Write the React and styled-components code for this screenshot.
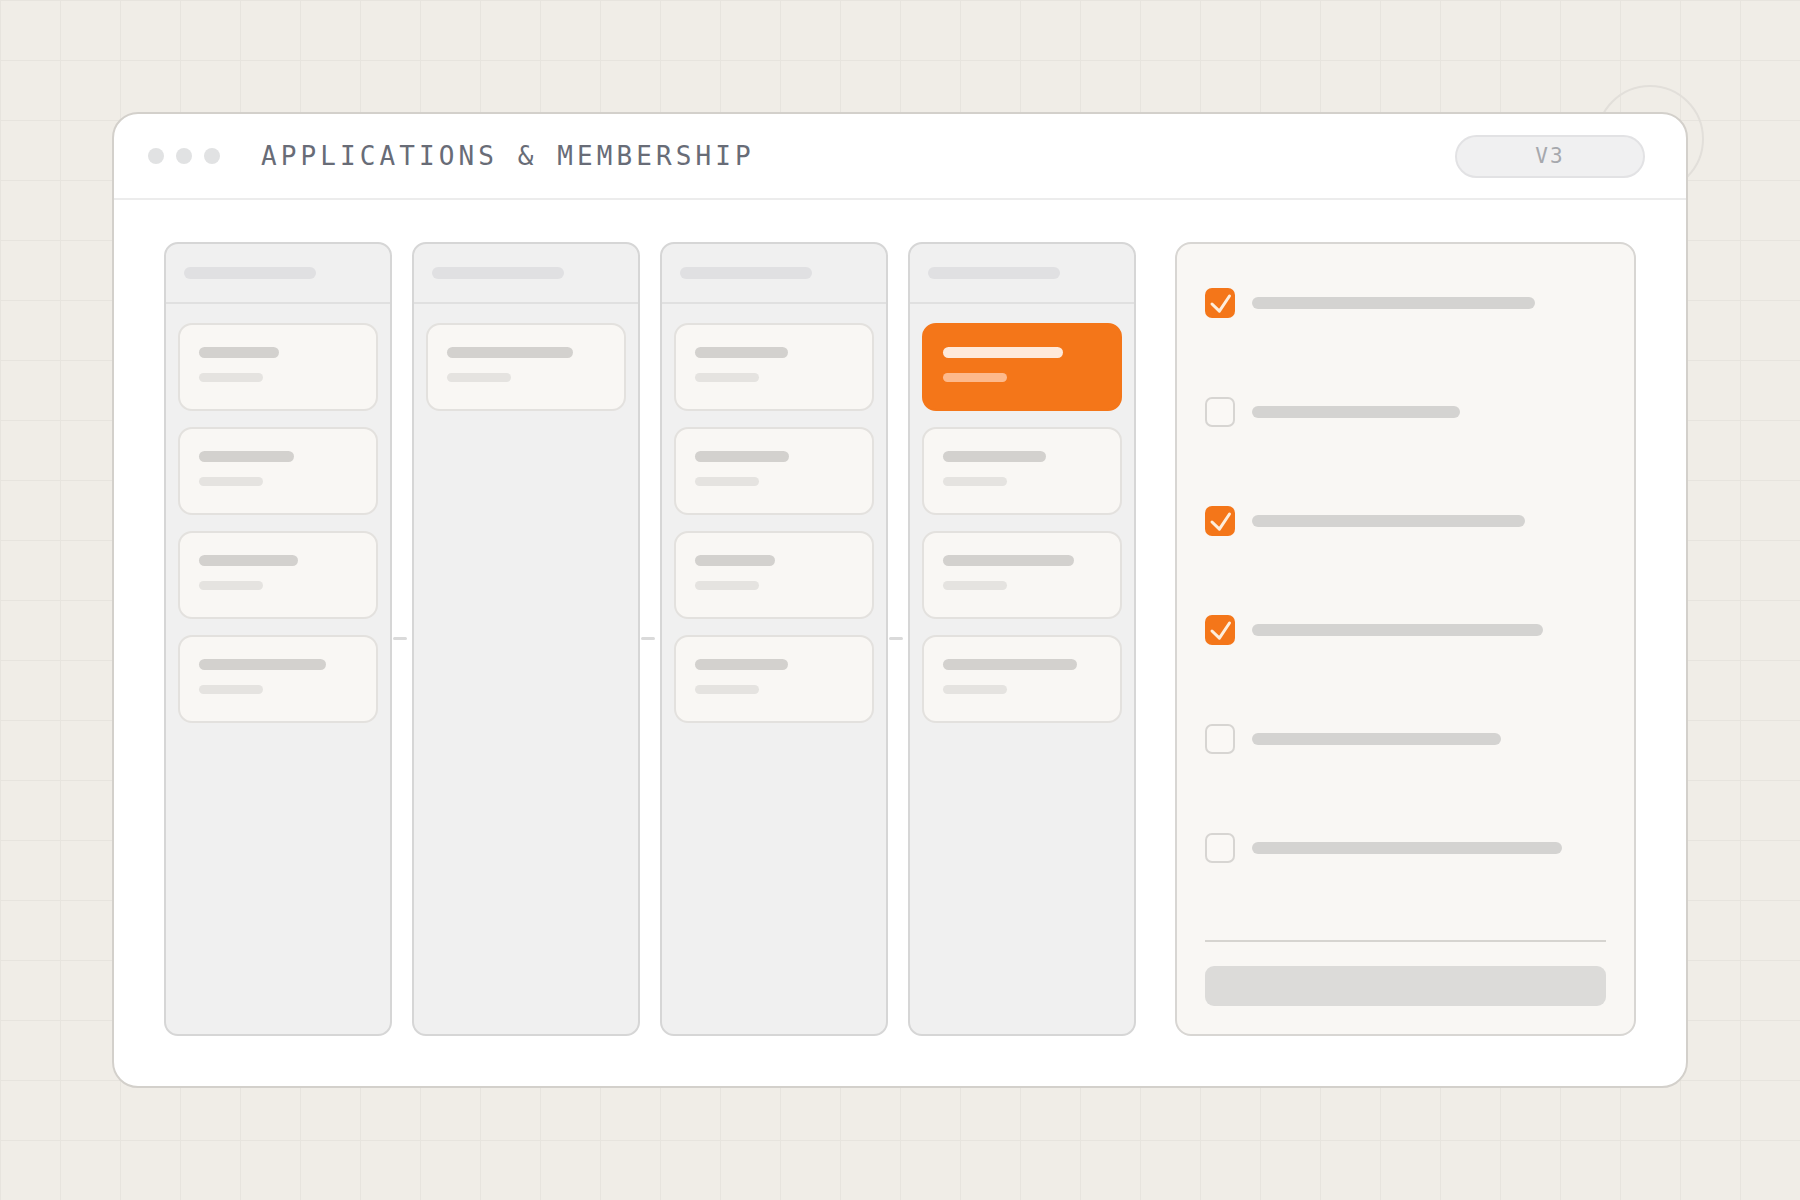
import React from "react"
import styled, { createGlobalStyle } from "styled-components"

const GlobalStyle = createGlobalStyle`
  html, body {
    margin: 0;
    padding: 0;
  }
  body {
    background-color: #f0ede7;
    background-image:
      linear-gradient(to right, #e7e4de 1px, transparent 1px),
      linear-gradient(to bottom, #e7e4de 1px, transparent 1px);
    background-size: 60px 60px;
    font-family: "DejaVu Sans Mono", "Liberation Mono", monospace;
  }
`

const Stage = styled.div`
  position: relative;
  width: 1800px;
  height: 1200px;
  padding: 112px;
  box-sizing: border-box;
  display: flex;
`

const Halo = styled.div`
  position: absolute;
  left: 1596px;
  top: 85px;
  width: 108px;
  height: 108px;
  border-radius: 50%;
  border: 2px solid #e2dfda;
  box-sizing: border-box;
`

const Window = styled.div`
  position: relative;
  flex: 1;
  display: flex;
  flex-direction: column;
  background: #ffffff;
  border: 2px solid #d3d0cb;
  border-radius: 26px;
  overflow: hidden;
`

const TopBar = styled.div`
  height: 84px;
  flex: none;
  display: flex;
  align-items: center;
  padding: 0 41px 0 34px;
  border-bottom: 2px solid #ececec;
`

const Dots = styled.div`
  display: flex;
  gap: 12px;
  margin-right: 41px;
`

const Dot = styled.span`
  width: 16px;
  height: 16px;
  border-radius: 50%;
  background: #e1e2e3;
`

const Title = styled.h1`
  margin: 0;
  flex: 1;
  font-family: "DejaVu Sans Mono", "Liberation Mono", monospace;
  font-size: 26px;
  font-weight: 400;
  letter-spacing: 4.1px;
  color: #686c77;
`

const VersionPill = styled.div`
  width: 190px;
  height: 43px;
  box-sizing: border-box;
  display: flex;
  align-items: center;
  justify-content: center;
  background: #f0f0f1;
  border: 2px solid #e2e2e4;
  border-radius: 22px;
  font-size: 21px;
  letter-spacing: 2px;
  color: #a6a8ad;
`

const Body = styled.div`
  flex: 1;
  display: flex;
  padding: 42px 50px 50px;
`

const Board = styled.div`
  display: flex;
  gap: 20px;
  margin-right: 39px;
`

const Column = styled.div`
  position: relative;
  width: 228px;
  box-sizing: border-box;
  display: flex;
  flex-direction: column;
  background: #f0f0f0;
  border: 2px solid #d6d6d6;
  border-radius: 14px;

  &:not(:last-child)::after {
    content: "";
    position: absolute;
    right: -17px;
    top: 50%;
    width: 14px;
    height: 3px;
    margin-top: -2px;
    border-radius: 2px;
    background: #dadada;
  }
`

const ColumnHead = styled.div`
  height: 58px;
  display: flex;
  align-items: center;
  padding-left: 18px;
  border-bottom: 2px solid #e0e0e0;
`

const HeadBar = styled.span`
  width: 132px;
  height: 12px;
  border-radius: 6px;
  background: #e0e0e2;
`

const CardList = styled.div`
  display: flex;
  flex-direction: column;
  gap: 16px;
  padding: 19px 12px;
`

const Card = styled.div`
  height: 88px;
  box-sizing: border-box;
  display: flex;
  flex-direction: column;
  gap: 15px;
  padding: 22px 19px;
  border-radius: 14px;
  border: 2px solid ${p => (p.$active ? "#f47619" : "#e3e1de")};
  background: ${p => (p.$active ? "#f47619" : "#f9f7f4")};
`

const TitleBar = styled.span`
  height: 11px;
  border-radius: 6px;
  background: ${p => (p.$active ? "#fee9da" : "#d3d1ce")};
`

const SubBar = styled.span`
  width: 64px;
  height: 9px;
  border-radius: 5px;
  background: ${p => (p.$active ? "#fdb98b" : "#e5e3e0")};
`

const Panel = styled.div`
  flex: 1;
  display: flex;
  flex-direction: column;
  padding: 44px 28px 28px;
  background: #f9f7f4;
  border: 2px solid #d8d6d3;
  border-radius: 16px;
`

const Checklist = styled.div`
  flex: 1;
  display: flex;
  flex-direction: column;
  gap: 79px;
`

const Row = styled.div`
  display: flex;
  align-items: center;
  gap: 17px;
`

const Box = styled.span`
  width: 30px;
  height: 30px;
  flex: none;
  box-sizing: border-box;
  display: flex;
  border-radius: 7px;
  background: ${p => (p.$checked ? "#f47619" : "#faf8f5")};
  border: ${p => (p.$checked ? "none" : "2px solid #d7d5d2")};
`

const RowBar = styled.span`
  height: 12px;
  border-radius: 6px;
  background: #d4d3d1;
`

const Rule = styled.div`
  height: 2px;
  background: #d6d4d0;
  margin-bottom: 24px;
`

const SubmitBar = styled.div`
  height: 40px;
  border-radius: 9px;
  background: #dcdbd9;
`

const columns = [
  [80, 95, 99, 127],
  [126],
  [93, 94, 80, 93],
  [120, 103, 131, 134]
]

const checklist = [
  { checked: true, width: 283 },
  { checked: false, width: 208 },
  { checked: true, width: 273 },
  { checked: true, width: 291 },
  { checked: false, width: 249 },
  { checked: false, width: 310 }
]

const Check = () => (
  <svg width="30" height="30" viewBox="0 0 30 30" fill="none">
    <path
      d="M7 16L14.4 23.2L24.5 8"
      stroke="#fdeedd"
      strokeWidth="3"
      strokeLinecap="round"
      strokeLinejoin="round"
    />
  </svg>
)

export default function App() {
  return (
    <Stage>
      <GlobalStyle />
      <Halo />
      <Window>
        <TopBar>
          <Dots>
            <Dot />
            <Dot />
            <Dot />
          </Dots>
          <Title>APPLICATIONS &amp; MEMBERSHIP</Title>
          <VersionPill>V3</VersionPill>
        </TopBar>
        <Body>
          <Board>
            {columns.map((cards, ci) => (
              <Column key={ci}>
                <ColumnHead>
                  <HeadBar />
                </ColumnHead>
                <CardList>
                  {cards.map((w, i) => {
                    const active = ci === 3 && i === 0
                    return (
                      <Card key={i} $active={active}>
                        <TitleBar $active={active} style={{ width: w }} />
                        <SubBar $active={active} />
                      </Card>
                    )
                  })}
                </CardList>
              </Column>
            ))}
          </Board>
          <Panel>
            <Checklist>
              {checklist.map((item, i) => (
                <Row key={i}>
                  <Box $checked={item.checked}>{item.checked && <Check />}</Box>
                  <RowBar style={{ width: item.width }} />
                </Row>
              ))}
            </Checklist>
            <Rule />
            <SubmitBar />
          </Panel>
        </Body>
      </Window>
    </Stage>
  )
}
